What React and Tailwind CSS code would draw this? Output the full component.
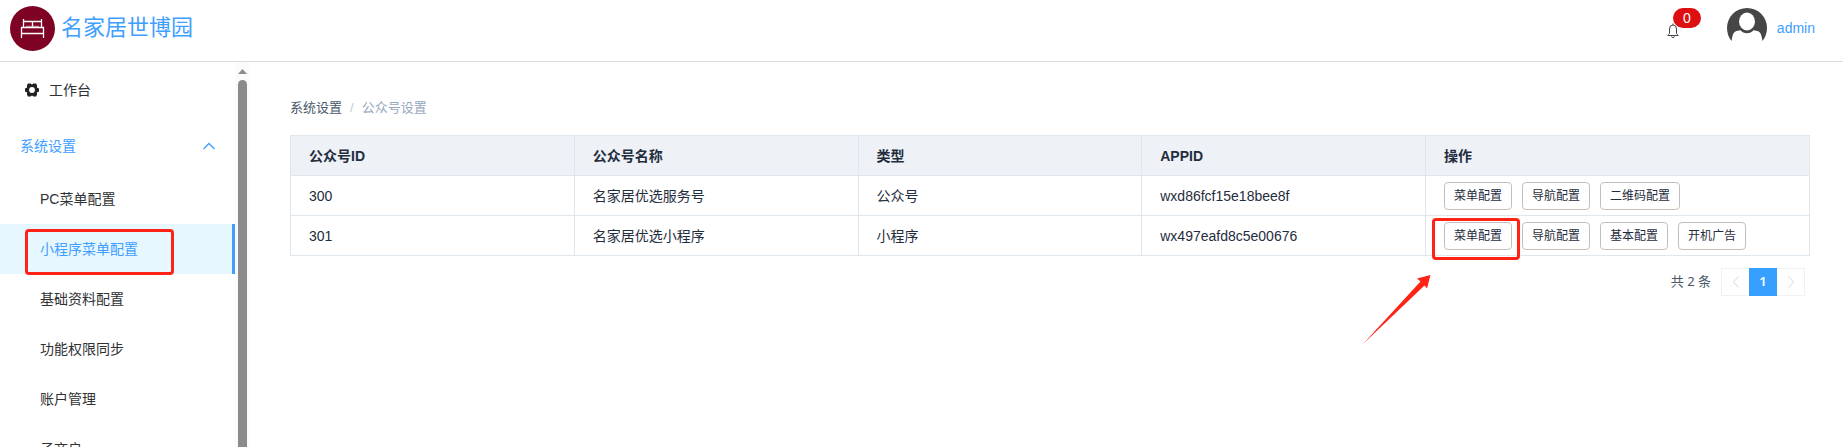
import { useState } from 'react'

const MENU_ITEMS = ['PC菜单配置', '小程序菜单配置', '基础资料配置', '功能权限同步', '账户管理', '子商户']

const ACCOUNTS = [
  {
    id: 300,
    name: '名家居优选服务号',
    type: '公众号',
    appId: 'wxd86fcf15e18bee8f',
    actions: ['菜单配置', '导航配置', '二维码配置'],
  },
  {
    id: 301,
    name: '名家居优选小程序',
    type: '小程序',
    appId: 'wx497eafd8c5e00676',
    actions: ['菜单配置', '导航配置', '基本配置', '开机广告'],
    marked: '菜单配置',
  },
]

function Logo() {
  return (
    <svg className="size-[45px] shrink-0" viewBox="0 0 45 45" fill="none">
      <circle cx="22.5" cy="22.5" r="22.5" fill="#7d0224" />
      <g stroke="#fff" strokeWidth="1.3">
        <path d="M13.500 13v8.500M31.500 13v8.500M13.500 15.500h18M22.500 15.500v5" />
        <path d="M11.500 32V21.500h22V32M11.500 27.500h22" />
        <path d="M16 20.300h13" strokeWidth="1" opacity="0.6" />
      </g>
    </svg>
  )
}

function GearIcon() {
  return (
    <svg className="size-[14px]" viewBox="0 0 14 14">
      <path
        fill="#222"
        fillRule="evenodd"
        d="M2.800.5h2.800L7 1.400 8.400.5h2.800l.9 2.300-.2 1.700 2.100 1v3l-2.100 1 .2 1.700-.9 2.300H8.400L7 12.600l-1.400.9H2.800l-.9-2.300.2-1.700L0 8.500v-3l2.100-1-.2-1.700zM7 4.100a2.900 2.900 0 1 0 0 5.800 2.900 2.900 0 0 0 0-5.800z"
      />
    </svg>
  )
}

function BellIcon() {
  return (
    <svg className="w-3 h-[15px]" viewBox="0 0 12 15" fill="none" stroke="#444" strokeWidth="1">
      <path d="M.5 12.500h11M1.500 12.500v-1l1-1V6a3.500 4 0 0 1 7 0v4.500l1 1v1M6 .5V2M4.500 13.500a1.500 1 0 0 0 3 0" />
    </svg>
  )
}

function Avatar() {
  return (
    <svg className="size-10" viewBox="0 0 40 40">
      <path
        fill="#464646"
        d="M20 0a20 20 0 0 1 20 20c0 4.500-1.300 9-4.500 13-.8-5-1.500-8-3.500-9.300-1.800-1-3.800-1.300-5.500-1.500-1.500 2-4 3-6.500 3s-5-1-6.500-3c-1.700.2-3.700.5-5.500 1.500C6 25 5.300 28 4.500 33 1.300 29 0 24.500 0 20A20 20 0 0 1 20 0z"
      />
      <ellipse cx="20" cy="13.500" rx="8" ry="9" fill="#fff" />
    </svg>
  )
}

function Chevron({ d, className }) {
  return (
    <svg className={className} viewBox="0 0 12 12" fill="none" stroke="currentColor" strokeWidth="1.3">
      <path d={d} />
    </svg>
  )
}

function Header() {
  return (
    <header className="flex shrink-0 items-start justify-between h-[62px] border-b border-[#dcdcdc] pl-[10px] pr-7">
      <div className="flex items-start gap-[6px] pt-[6px]">
        <Logo />
        <h1 className="text-[22px] leading-[43px] text-[#409eff]">名家居世博园</h1>
      </div>
      <div className="flex items-start pt-2">
        <button className="relative mr-12 pt-[15px]" aria-label="通知">
          <BellIcon />
          <span className="absolute left-[6px] top-0 w-7 rounded-full bg-[#dd0f10] text-center text-sm leading-5 text-white">
            0
          </span>
        </button>
        <Avatar />
        <a href="#" className="ml-[10px] text-sm leading-10 text-[#409eff]">
          admin
        </a>
      </div>
    </header>
  )
}

function Sidebar() {
  const [active, setActive] = useState('小程序菜单配置')

  return (
    <aside className="flex w-[250px] shrink-0 overflow-hidden">
      <nav className="grow text-sm text-[#303133]">
        <a href="#" className="flex h-14 items-center gap-[10px] pl-[25px]">
          <GearIcon />
          工作台
        </a>
        <button className="flex h-14 w-full items-center justify-between pl-5 pr-5 text-[#409eff]">
          系统设置
          <Chevron d="M.5 9 6 3.500 11.500 9" className="size-3" />
        </button>
        <ul>
          {MENU_ITEMS.map((item) => (
            <li key={item} className="relative">
              <a
                href="#"
                onClick={() => setActive(item)}
                className={`block h-[50px] pl-10 leading-[50px] ${
                  item === active ? 'border-r-[3px] border-[#409eff] bg-[#e6f7ff] text-[#409eff]' : ''
                }`}
              >
                {item}
              </a>
              {item === '小程序菜单配置' && (
                <span className="pointer-events-none absolute left-[25px] top-[5px] h-[46px] w-[149px] rounded-sm border-[3px] border-[#ff2216]" />
              )}
            </li>
          ))}
        </ul>
      </nav>
      {/* Scrollbar */}
      <div className="flex w-[15px] shrink-0 flex-col items-center gap-[6px] bg-[#fbfbfb] pt-[7px]">
        <svg className="h-[5px] w-[9px] shrink-0" viewBox="0 0 9 5">
          <path d="M4.500 0 9 5H0z" fill="#8b8b8b" />
        </svg>
        <div className="w-[9px] grow rounded-t-full bg-[#8b8b8b]" />
      </div>
    </aside>
  )
}

function ActionButton({ label, marked }) {
  return (
    <div className="relative">
      <button className="block h-7 rounded border border-[#c0c0c0] bg-white px-[9px] text-xs text-[#1f2d3d]">
        {label}
      </button>
      {marked && (
        <>
          <span className="pointer-events-none absolute -left-3 -right-2 -top-1 -bottom-[10px] rounded-sm border-[3px] border-[#ff2216]" />
          <svg
            className="pointer-events-none absolute -left-[81px] top-[52px] h-[70px] w-[68px]"
            viewBox="0 0 68 70"
          >
            <path d="M0 70 57.500 7.500 54 4.500 67.500 1 64 14.500 61.500 11.500z" fill="#ff2216" />
          </svg>
        </>
      )}
    </div>
  )
}

function AccountTable() {
  return (
    <table className="w-full table-fixed border-collapse border border-[#dfe6ec] text-left text-sm text-[#1f2d3d]">
      <thead>
        <tr className="h-10 bg-[#eef1f6]">
          <th className="border border-[#dfe6ec] px-[18px]">公众号ID</th>
          <th className="border border-[#dfe6ec] px-[18px]">公众号名称</th>
          <th className="border border-[#dfe6ec] px-[18px]">类型</th>
          <th className="border border-[#dfe6ec] px-[18px]">APPID</th>
          <th className="w-[384px] border border-[#dfe6ec] px-[18px]">操作</th>
        </tr>
      </thead>
      <tbody>
        {ACCOUNTS.map((row) => (
          <tr key={row.id} className="h-10">
            <td className="border border-[#dfe6ec] px-[18px]">{row.id}</td>
            <td className="border border-[#dfe6ec] px-[18px]">{row.name}</td>
            <td className="border border-[#dfe6ec] px-[18px]">{row.type}</td>
            <td className="border border-[#dfe6ec] px-[18px]">{row.appId}</td>
            <td className="border border-[#dfe6ec] px-[18px]">
              <div className="flex gap-[10px]">
                {row.actions.map((label) => (
                  <ActionButton key={label} label={label} marked={label === row.marked} />
                ))}
              </div>
            </td>
          </tr>
        ))}
      </tbody>
    </table>
  )
}

function Pagination() {
  return (
    <div className="mt-3 flex items-center justify-end pr-[5px] font-['Noto_Sans','Noto_Sans_CJK_SC',sans-serif] text-[13px] text-[#48576a]">
      <span className="mr-[10px]">共 2 条</span>
      <button disabled aria-label="上一页" className="flex size-7 items-center justify-center border border-r-0 border-[#eef1f6] text-[#e4e8f1]">
        <Chevron d="M8.500 .5 3.500 6l5 5.500" className="size-3" />
      </button>
      <button className="size-7 bg-[#369fff] font-semibold text-white">1</button>
      <button disabled aria-label="下一页" className="flex size-7 items-center justify-center border border-l-0 border-[#eef1f6] text-[#e4e8f1]">
        <Chevron d="M3.500 .5 8.500 6l-5 5.500" className="size-3" />
      </button>
    </div>
  )
}

export default function App() {
  return (
    <div className="flex h-screen flex-col overflow-hidden bg-white font-['Liberation_Sans','Noto_Sans_CJK_SC',sans-serif]">
      <Header />
      <div className="flex min-h-0 grow">
        <Sidebar />
        <main className="min-w-0 grow pl-10 pr-[33px] pt-9">
          <div className="mb-[17px] flex gap-2 text-[13px] leading-5">
            <a href="#" className="text-[#48576a]">系统设置</a>
            <span className="text-[#bfcbd9]">/</span>
            <span className="text-[#97a8be]">公众号设置</span>
          </div>
          <AccountTable />
          <Pagination />
        </main>
      </div>
    </div>
  )
}
